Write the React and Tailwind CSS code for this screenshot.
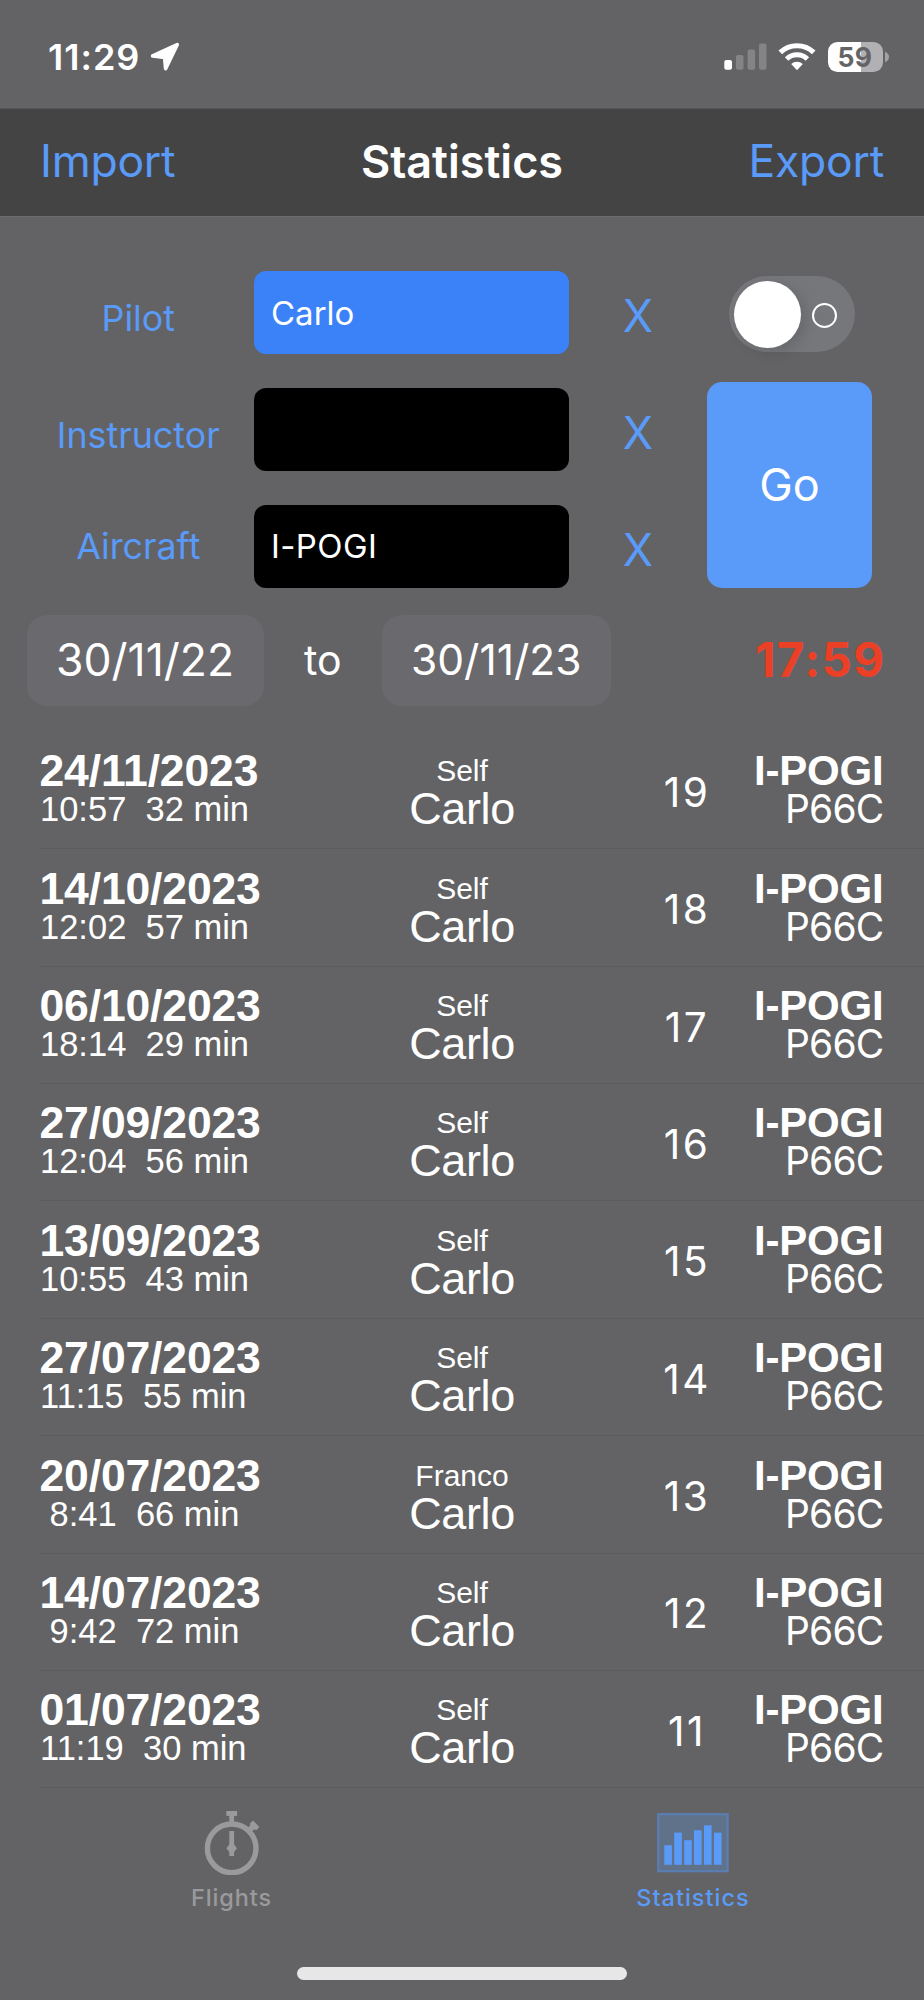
import React from "react";

const fields = [
  { label: "Pilot", value: "Carlo", box: "bg-[#3b82f8]", labelPad: "pt-[13px]", tracking: "" },
  { label: "Instructor", value: "", box: "bg-black", labelPad: "pt-[13px]", tracking: "" },
  { label: "Aircraft", value: "I-POGI", box: "bg-black", labelPad: "pt-0", tracking: "tracking-[0.4px]" },
];

const flights = [
  { date: "24/11/2023", time: "10:57", min: 32, with: "Self", n: 19 },
  { date: "14/10/2023", time: "12:02", min: 57, with: "Self", n: 18 },
  { date: "06/10/2023", time: "18:14", min: 29, with: "Self", n: 17 },
  { date: "27/09/2023", time: "12:04", min: 56, with: "Self", n: 16 },
  { date: "13/09/2023", time: "10:55", min: 43, with: "Self", n: 15 },
  { date: "27/07/2023", time: "11:15", min: 55, with: "Self", n: 14 },
  { date: "20/07/2023", time: " 8:41", min: 66, with: "Franco", n: 13 },
  { date: "14/07/2023", time: " 9:42", min: 72, with: "Self", n: 12 },
  { date: "01/07/2023", time: "11:19", min: 30, with: "Self", n: 11 },
];

function StatusBar() {
  return (
    <div className="flex h-[108px] items-center justify-between pt-[5px] pr-[35px] pl-[48px]">
      <div className="flex items-center">
        <span className="text-[36px] leading-none font-semibold tracking-[1px]">11:29</span>
        <svg className="ml-[10px]" width="30" height="30" viewBox="0 0 30 30" fill="#fff">
          <path
            d="M27.2 2.6 L15.6 26.6 L14.6 15.4 L2.6 13.9 Z"
            stroke="#fff"
            strokeWidth="3.6"
            strokeLinejoin="round"
          />
        </svg>
      </div>
      <div className="flex items-center">
        <svg width="43" height="30" viewBox="0 0 43 30">
          <rect x="0.3" y="18" width="7.7" height="9.8" rx="2" fill="#fff" />
          <rect x="12" y="13" width="7.5" height="14.8" rx="2" fill="#848486" />
          <rect x="23.6" y="7.4" width="7.5" height="20.4" rx="2" fill="#848486" />
          <rect x="35" y="1.6" width="7.5" height="26.2" rx="2" fill="#848486" />
        </svg>
        <svg className="ml-[11px]" width="38" height="30" viewBox="0 0 38 30" fill="none">
          <path d="M2.3 10.4 A24.3 24.3 0 0 1 35.7 10.4" stroke="#fff" strokeWidth="5.2" />
          <path d="M8.6 17 A15.1 15.1 0 0 1 29.4 17" stroke="#fff" strokeWidth="5" />
          <path d="M13.2 22 A8.5 8.5 0 0 1 24.8 22 L19.7 27.6 Q19 28.2 18.3 27.6 Z" fill="#fff" />
        </svg>
        <div className="ml-[12px] flex h-[30px] w-[55px] items-center justify-center rounded-[9.5px] bg-[linear-gradient(90deg,#fff_60%,#b1b1b3_60%)]">
          <span className="pt-[1px] pr-[1px] text-[26.5px] leading-none font-bold tracking-[0.5px] text-[#646466]">59</span>
        </div>
        <svg className="ml-[2px]" width="4" height="12" viewBox="0 0 4 12">
          <path d="M0 0.8 Q4 2.6 4 6 T0 11.2 Z" fill="#a2a2a4" />
        </svg>
      </div>
    </div>
  );
}

function NavBar() {
  return (
    <div className="grid h-[109px] grid-cols-3 items-center border-t border-b border-t-[#555557] border-b-[#6d6d6f] bg-[#444445] pr-[40px] pb-[2px] pl-[40px] text-[44.5px] leading-none">
      <span className="tracking-[-0.25px] text-[#5a9af8]">Import</span>
      <span className="text-center text-[45px] font-semibold whitespace-nowrap">Statistics</span>
      <span className="text-right tracking-[-0.25px] text-[#5a9af8]">Export</span>
    </div>
  );
}

function Filters() {
  return (
    <div className="flex pt-[54px]">
      <div className="flex flex-col gap-[33.5px]">
        {fields.map((f) => (
          <div key={f.label} className="flex h-[83.4px] w-[707px] items-center leading-none">
            <div className={`w-[254px] pl-[22.5px] text-center text-[35.8px] text-[#5a9af8] ${f.labelPad}`}>{f.label}</div>
            <div className={`flex h-full w-[315px] items-center rounded-[12px] pt-[1px] pl-[17px] text-[33px] ${f.box} ${f.tracking}`}>
              {f.value}
            </div>
            <div className="flex-1 pt-[8px] text-center text-[44.5px] text-[#5a9af8]">X</div>
          </div>
        ))}
      </div>
      <div className="flex w-[165px] flex-col items-center pt-[5px]">
        <div className="ml-[5px] flex h-[76px] w-[126px] items-center justify-between rounded-full bg-[#76777b] pr-[18px] pl-[5px]">
          <div className="size-[67px] rounded-full bg-white shadow-[5px_4px_14px_rgba(0,0,0,0.13)]" />
          <div className="mt-[2px] size-[25px] rounded-full border-[2.5px] border-white" />
        </div>
        <div className="mt-[30px] flex h-[206px] w-full items-center justify-center rounded-[15px] bg-[#5a9af9] pb-[2px] text-[45px] leading-none">
          Go
        </div>
      </div>
    </div>
  );
}

function DateRange() {
  return (
    <div className="mt-[26.8px] flex h-[91px] items-center pl-[26.5px] leading-none">
      <div className="flex h-full w-[237px] items-center justify-center rounded-[20px] bg-[#6a696e] text-[44.5px]">
        30/11/22
      </div>
      <div className="w-[118.5px] pt-[1px] text-center text-[41px]">to</div>
      <div className="flex h-full w-[228.5px] items-center justify-center rounded-[20px] bg-[#6a696e] text-[42.5px]">
        30/11/23
      </div>
      <div className="flex-1 pr-[38.5px] pb-[1px] text-right text-[47.5px] font-bold tracking-[1.4px] text-[#eb4025]">17:59</div>
    </div>
  );
}

function FlightRow({ f }) {
  return (
    <div className="ml-[39.5px] grid h-[117.375px] grid-cols-[302.5px_240px_60px_87px_1fr] border-b border-[#5c5c5f] pt-[20.3px] font-['Liberation_Sans',sans-serif]">
      <div>
        <div className="text-[44.5px] leading-[38px] font-bold tracking-[-0.15px]">{f.date}</div>
        <div className="pl-[0.5px] text-[34.5px] leading-[38.5px] whitespace-pre">{`${f.time}  ${f.min} min`}</div>
      </div>
      <div className="text-center">
        <div className="text-[30px] leading-[38px]">{f.with}</div>
        <div className="text-[45px] leading-[38px] tracking-[-0.4px]">Carlo</div>
      </div>
      <div />
      <div className="pt-[20.5px] pl-[3px] text-center font-[Inter,sans-serif] text-[40.5px] leading-[40px] tracking-[2.5px]">{f.n}</div>
      <div className="pr-[40.5px] text-right">
        <div className="text-[42px] leading-[38px] font-bold tracking-[-0.2px]">I-POGI</div>
        <div className="font-[Inter,sans-serif] text-[39px] leading-[37.5px] tracking-[-0.8px]">P66C</div>
      </div>
    </div>
  );
}

function StopwatchIcon() {
  return (
    <svg width="56" height="64" viewBox="0 0 56 64" fill="#9a9a9d">
      <circle cx="27.7" cy="37.3" r="24.3" fill="none" stroke="#9a9a9d" strokeWidth="5.4" />
      <rect x="22.3" y="0" width="10.8" height="4.9" />
      <rect x="25.3" y="4" width="4.8" height="8" />
      <path d="M44.5 20 L50.5 14" stroke="#9a9a9d" strokeWidth="5.5" />
      <path d="M47.3 11.3 L53.7 17.7" stroke="#9a9a9d" strokeWidth="5" />
      <path d="M25.3 20 h4.8 v13.5 l2.9 3.8 -2.9 3.8 v4 h-4.8 v-4 l-2.9 -3.8 2.9 -3.8 z" />
    </svg>
  );
}

function ChartIcon() {
  return (
    <svg width="72" height="60" viewBox="0 0 72 60" fill="#5a9af8">
      <rect x="1.2" y="1.2" width="69.4" height="57" fill="#5f7289" stroke="#5a7eb1" strokeWidth="2.2" />
      <rect x="7.3" y="32.2" width="7.6" height="19.6" />
      <rect x="17.2" y="19.6" width="7.6" height="32.2" />
      <rect x="27.2" y="27.2" width="7.6" height="24.6" />
      <rect x="37" y="17.3" width="7.6" height="34.5" />
      <rect x="47" y="12.3" width="7.6" height="39.5" />
      <rect x="57" y="19.6" width="7.6" height="32.2" />
    </svg>
  );
}

function TabBar() {
  return (
    <div className="grid h-[179px] grid-cols-2 pt-[22.5px] text-[23.5px] leading-[24px] font-medium tracking-[1.1px]">
      <div className="flex flex-col items-center text-[#9a9a9d]">
        <div className="flex h-[64px] items-end pl-[1px]">
          <StopwatchIcon />
        </div>
        <span className="mt-[11.5px] pl-[1px] tracking-[0.9px]">Flights</span>
      </div>
      <div className="flex flex-col items-center text-[#5a9af8]">
        <div className="flex h-[64px] items-center">
          <ChartIcon />
        </div>
        <span className="mt-[11.5px] tracking-[1px]">Statistics</span>
      </div>
    </div>
  );
}

export default function App() {
  return (
    <div className="h-[2000px] w-[924px] overflow-hidden bg-[#636365] font-[Inter,sans-serif] text-white">
      <StatusBar />
      <NavBar />
      <Filters />
      <DateRange />
      <div className="mt-[26px]">
        {flights.map((f) => (
          <FlightRow key={f.n} f={f} />
        ))}
      </div>
      <TabBar />
      <div className="mx-auto h-[13px] w-[330px] rounded-full bg-[#e7e7e7]" />
    </div>
  );
}
